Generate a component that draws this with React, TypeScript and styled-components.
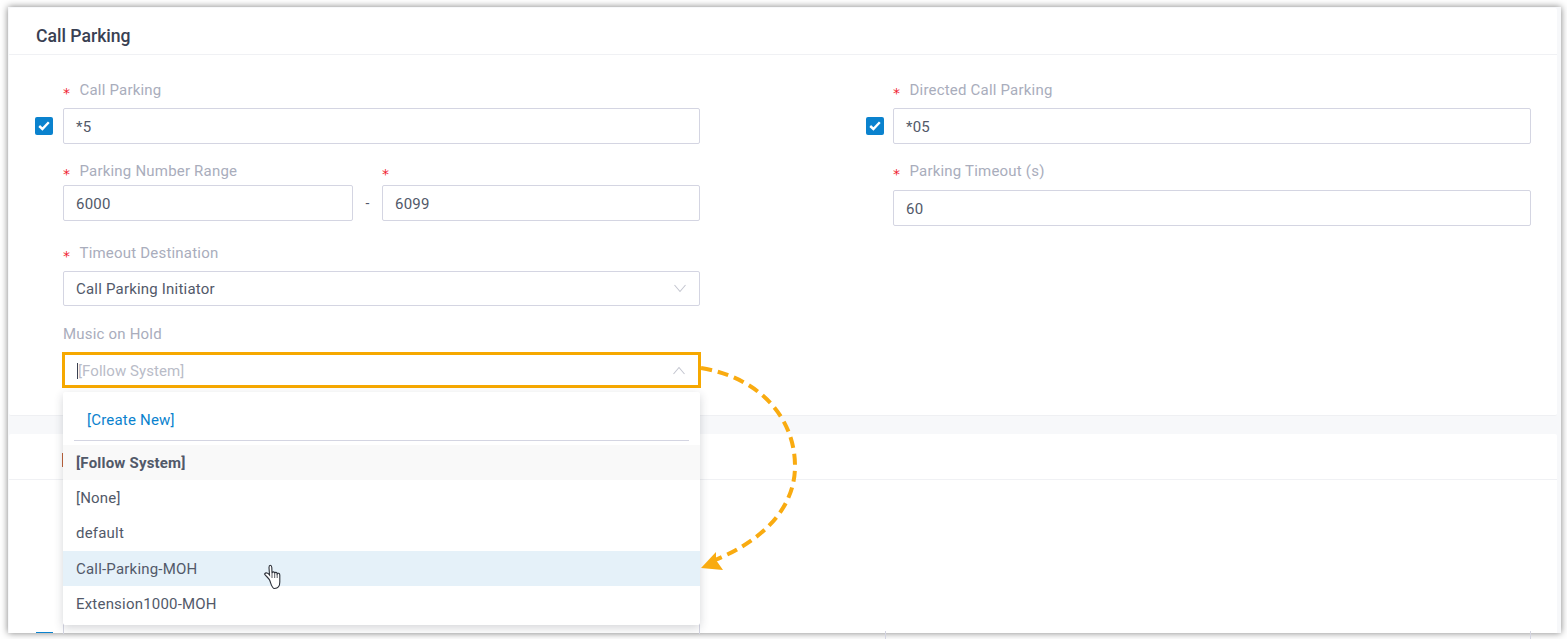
import React from "react";
import styled, { createGlobalStyle } from "styled-components";

const Global = createGlobalStyle`
  html, body { margin: 0; padding: 0; background: #fff; }
  body { font-family: Roboto, "Liberation Sans", sans-serif; overflow: hidden; }
`;

const Page = styled.div`
  position: relative;
  width: 1567px;
  height: 639px;
  padding: 7px 6px 6px 8px;
  box-sizing: border-box;
  overflow: hidden;
`;

const Frame = styled.div`
  height: 100%;
  background: #f7f8fa;
  box-shadow: 0 0 7px rgba(0, 0, 0, 0.5);
  overflow: hidden;
  padding: 1px 4px 0 1px;
  box-sizing: border-box;
`;

const Card = styled.section`
  background: #fff;
  border-radius: 2px;
  border-bottom: 1px solid #eff0f3;
`;

const CardHeader = styled.header<{ $h: number }>`
  height: ${(p) => p.$h}px;
  box-sizing: border-box;
  padding: 10px 0 0 27px;
  display: flex;
  align-items: center;
  border-bottom: 1px solid #f0f1f4;
  font-size: 17.6px;
  font-weight: 500;
  color: #394052;
`;

const FormGrid = styled.div`
  display: grid;
  grid-template-columns: 637px 638px;
  column-gap: 193px;
  padding: 25px 0 0 54px;
  height: 360px;
  box-sizing: border-box;
`;

const Column = styled.div`
  display: flex;
  flex-direction: column;
  align-items: stretch;
`;

const Field = styled.div<{ $top: number }>`
  position: relative;
  margin-top: ${(p) => p.$top}px;
`;

const Label = styled.div<{ $gap: number }>`
  height: 20px;
  line-height: 20px;
  margin-bottom: ${(p) => p.$gap}px;
  font-size: 15px;
  letter-spacing: 0.2px;
  color: #a9adbc;
  display: flex;
  white-space: nowrap;
`;

const Star = styled.span`
  color: #f01c30;
  width: 16.5px;
  font-family: "DejaVu Sans", sans-serif;
  font-size: 14px;
  line-height: 27px;
`;

const Box = styled.div<{ $h?: number; $active?: boolean }>`
  height: ${(p) => p.$h ?? 36}px;
  margin: 0 ${(p) => (p.$active ? -1 : 0)}px;
  box-sizing: border-box;
  border: ${(p) => (p.$active ? "3px solid #f6a800" : "1px solid #d4d5e2")};
  border-radius: ${(p) => (p.$active ? 0 : 2)}px;
  padding: 0 12px;
  display: flex;
  align-items: center;
  justify-content: space-between;
  font-size: 15px;
  letter-spacing: 0.2px;
  color: #525969;
  background: #fff;
`;

const Caret = styled.i`
  display: block;
  width: 1px;
  height: 16px;
  background: #394052;
  margin-top: 1px;
`;

const Placeholder = styled.span`
  color: #b9bcc8;
  flex: 1;
  padding-top: 2px;
  letter-spacing: 0.07px;
`;

const Value = styled.span`
  flex: 1;
  padding-top: 1px;
`;

const RangeRow = styled.div`
  display: grid;
  grid-template-columns: 290px 29px 318px;
`;

const Dash = styled.span`
  font-size: 14px;
  color: #525969;
  text-align: center;
  align-self: center;
  margin-top: 24px;
`;

const Check = styled.div<{ $left: number }>`
  position: absolute;
  left: ${(p) => p.$left}px;
  bottom: 9px;
  width: 18px;
  height: 18px;
  border-radius: 2px;
  background: #0a82ce;
  display: flex;
  align-items: center;
  justify-content: center;
`;

const SecondBody = styled.div`
  position: relative;
  height: 160px;
`;

const OrangeMark = styled.i`
  position: absolute;
  left: 53px;
  top: -27px;
  width: 3px;
  height: 14px;
  background: #c0623a;
`;

const Strip = styled.div`
  height: 18px;
`;

const Dropdown = styled.div`
  position: absolute;
  left: 63px;
  top: 392px;
  width: 637px;
  height: 233px;
  background: #fff;
  border-radius: 2px;
  box-shadow: 0 3px 10px rgba(40, 45, 60, 0.2);
`;

const CreateRow = styled.div`
  height: 49px;
  margin: 0 11px 4px;
  padding: 7px 13px 0;
  box-sizing: border-box;
  display: flex;
  align-items: center;
  font-size: 15px;
  letter-spacing: 0.2px;
  color: #0a82ce;
  border-bottom: 1px solid #d4d5e2;
`;

const Option = styled.div<{ $bold?: boolean; $bg?: string }>`
  height: 35.3px;
  padding: 0 13px;
  display: flex;
  align-items: center;
  font-size: 15px;
  letter-spacing: 0.2px;
  color: #525969;
  font-weight: ${(p) => (p.$bold ? 700 : 400)};
  background: ${(p) => p.$bg ?? "transparent"};
`;

const Overlay = styled.svg`
  position: absolute;
  left: 0;
  top: 0;
  pointer-events: none;
`;

const Tick = styled.i<{ $x: number; $y: number }>`
  position: absolute;
  left: ${(p) => p.$x}px;
  top: ${(p) => p.$y}px;
  width: 1px;
  height: 12px;
  background: #d4d5e2;
`;

const BottomCheck = styled.i`
  position: absolute;
  left: 36px;
  top: 632px;
  width: 17px;
  height: 1px;
  background: #0a82ce;
`;

const Chevron = ({ up }: { up?: boolean }) => (
  <svg width="14" height="9" viewBox="0 0 14 9" fill="none">
    <path d={up ? "M1.5 8L7 1.5 12.5 8" : "M1.5 1L7 7.5 12.5 1"} stroke="#c4c6d0" strokeWidth="1.1" />
  </svg>
);

const Tickmark = () => (
  <svg width="12" height="10" viewBox="0 0 12 10" fill="none">
    <path d="M1.2 5l3.2 3 6.4-6.8" stroke="#fff" strokeWidth="2.4" />
  </svg>
);

export default function App() {
  return (
    <>
      <Global />
      <Page>
        <Frame>
          <Card>
            <CardHeader $h={47}>Call Parking</CardHeader>
            <FormGrid>
              <Column>
                <Field $top={0}>
                  <Label $gap={8}><Star>*</Star>Call Parking</Label>
                  <Check $left={-28}><Tickmark /></Check>
                  <Box>
                    <Value>*5</Value>
                  </Box>
                </Field>
                <Field $top={17}>
                  <RangeRow>
                    <div>
                      <Label $gap={4}><Star>*</Star>Parking Number Range</Label>
                      <Box><Value>6000</Value></Box>
                    </div>
                    <Dash>-</Dash>
                    <div>
                      <Label $gap={4}><Star>*</Star></Label>
                      <Box><Value>6099</Value></Box>
                    </div>
                  </RangeRow>
                </Field>
                <Field $top={22}>
                  <Label $gap={8}><Star>*</Star>Timeout Destination</Label>
                  <Box $h={35}>
                    <Value>Call Parking Initiator</Value>
                    <Chevron />
                  </Box>
                </Field>
                <Field $top={18}>
                  <Label $gap={8}>Music on Hold</Label>
                  <Box $h={36} $active>
                    <Caret />
                    <Placeholder>[Follow System]</Placeholder>
                    <Chevron up />
                  </Box>
                </Field>
              </Column>
              <Column>
                <Field $top={0}>
                  <Label $gap={8}><Star>*</Star>Directed Call Parking</Label>
                  <Check $left={-27}><Tickmark /></Check>
                  <Box><Value>*05</Value></Box>
                </Field>
                <Field $top={17}>
                  <Label $gap={9}><Star>*</Star>Parking Timeout (s)</Label>
                  <Box><Value>60</Value></Box>
                </Field>
              </Column>
            </FormGrid>
          </Card>
          <Strip />
          <Card>
            <CardHeader $h={46} />
            <SecondBody>
              <OrangeMark />
            </SecondBody>
          </Card>
        </Frame>
        <Tick $x={63} $y={622} />
        <Tick $x={699} $y={622} />
        <Tick $x={885} $y={631} />
        <Tick $x={1530} $y={631} />
        <BottomCheck />
        <Dropdown>
          <CreateRow>[Create New]</CreateRow>
          <Option $bold $bg="#f9f9f9">[Follow System]</Option>
          <Option>[None]</Option>
          <Option>default</Option>
          <Option $bg="#e5f1f9">Call-Parking-MOH</Option>
          <Option>Extension1000-MOH</Option>
        </Dropdown>
        <Overlay width="1567" height="639" viewBox="0 0 1567 639">
          <path
            d="M701 368 C 762 378, 795 420, 795 466 C 795 515, 752 545, 715 560"
            fill="none"
            stroke="#f9ab10"
            strokeWidth="4"
            strokeDasharray="11 6"
          />
          <polygon points="701,568 716,552 716,560 723,570" fill="#f9ab10" />
          <path
            d="M270 581 C 269 578, 266.500 577, 264.500 574 C 266 572, 268 573, 269.500 575 L 269 567.500 C 269 564.500, 271.500 564.500, 271.800 567.500 L 272 573 C 272.500 571.500, 274.500 571.500, 274.700 573.200 C 275 572, 277 572, 277.200 573.800 C 277.800 572.800, 279.800 573.200, 279.800 575 L 279.800 582 C 279.800 586, 278 588.500, 274.500 588.500 C 272 588.500, 271 584, 270 581 Z"
            fill="#fff"
            stroke="#2b2f38"
            strokeWidth="1.1"
          />
          <path d="M272 573 V 578 M274.700 573 V 578 M277.200 574 V 578" stroke="#2b2f38" strokeWidth="0.8" fill="none" />
        </Overlay>
      </Page>
    </>
  );
}
